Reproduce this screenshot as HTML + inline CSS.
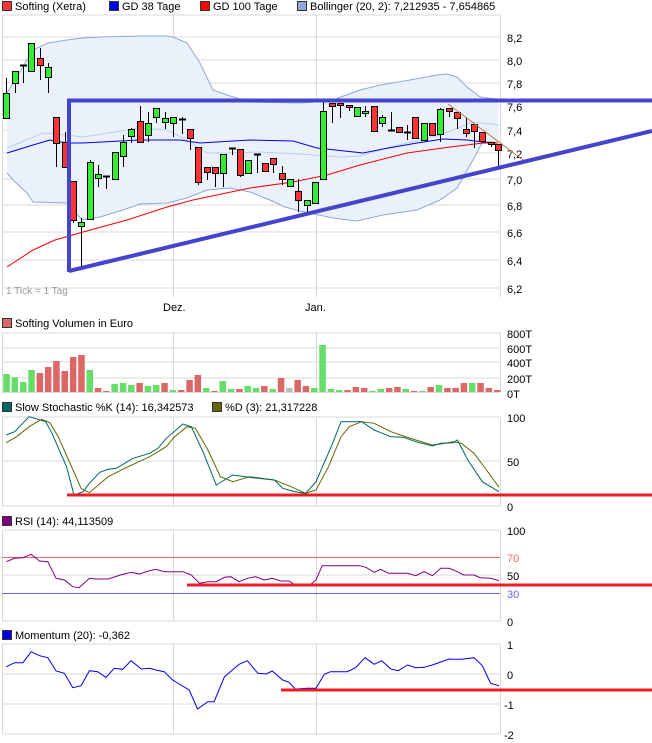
<!DOCTYPE html>
<html><head><meta charset="utf-8"><style>
html,body{margin:0;padding:0;background:#fff;}
svg{display:block;font-family:"Liberation Sans",sans-serif;}
</style></head><body>
<svg id="s" width="652" height="743" xmlns="http://www.w3.org/2000/svg"></svg>
<script>
var S=document.getElementById('s'),o='';
function L(x1,y1,x2,y2,c,w){o+='<line x1="'+x1+'" y1="'+y1+'" x2="'+x2+'" y2="'+y2+'" stroke="'+c+'" stroke-width="'+(w||1)+'"/>';}
function R(x,y,w,h,f,s){o+='<rect x="'+x+'" y="'+y+'" width="'+w+'" height="'+h+'" fill="'+f+'"'+(s?' stroke="'+s+'"':'')+'/>';}
function T(x,y,t,c,sz){o+='<text x="'+x+'" y="'+y+'" fill="'+(c||'#000')+'" font-size="'+(sz||11)+'">'+t+'</text>';}
function P(pts,c,w,f){o+='<polyline points="'+pts.map(function(p){return p[0]+','+p[1]}).join(' ')+'" fill="'+(f||'none')+'" stroke="'+c+'" stroke-width="'+(w||1)+'"/>';}
function Z(arr,oy){return arr.map(function(p){return[(p[0]/2.405).toFixed(1),(oy+p[1]/3).toFixed(1)]});}
var G='#d8d8d8';
function legend(x,y,c,t){R(x+.5,y+.5,9,9,c,'#333');T(x+13,y+9,t,'#000',11);}
legend(2,1,'#ff3333','Softing (Xetra)');legend(109,1,'#0000ee','GD 38 Tage');legend(200,1,'#ff0000','GD 100 Tage');legend(297,1,'#8fa8d8','Bollinger (20, 2): 7,212935 - 7,654865');
var gy=[37,60,83,106,130,153,179,205,232,260,288],gl=['8,2','8,0','7,8','7,6','7,4','7,2','7,0','6,8','6,6','6,4','6,2'];
L(2,15,500,15,G);
gy.forEach(function(y,i){L(2,y,500,y,G);T(507,y+5,gl[i],'#000',11);});
L(2.5,15,2.5,297,G);L(173.5,15,173.5,297,G);L(316.5,15,316.5,297,G);L(500.5,15,500.5,297,G);
var up=[[7,93],[15,80],[25,63],[33,50],[48,43],[67,40],[83,38],[100,37],[140,36],[167,36],[173,37],[187,43],[200,63],[213,90],[227,95],[243,100],[250,102],[300,103],[330,101],[360,90],[380,85],[410,80],[437,75],[447,74],[457,77],[467,87],[480,97],[487,98],[498,99]];
var lo=[[7,173],[13,180],[27,193],[33,202],[67,203],[82,220],[100,217],[123,210],[140,204],[167,203],[187,198],[207,190],[230,188],[250,192],[270,200],[285,207],[300,211],[333,218],[357,221],[383,215],[417,210],[440,200],[457,188],[473,160],[482,143],[490,142],[498,143]];
P(up.concat(lo.slice().reverse()),'none',0,'#eaf1fb');
P(up,'#8fa8d8');P(lo,'#8fa8d8');
P([[7,148],[43,133],[67,135],[83,137],[140,128],[167,130],[187,140],[207,153],[233,153],[260,152],[300,154],[340,157],[360,156],[390,147],[440,135],[473,122],[500,125]],'#b8d0f0');
P([[7,153],[33,145],[50,140],[67,143],[83,143],[140,140],[180,140],[200,143],[250,140],[293,141],[317,148],[363,153],[383,149],[417,143],[443,139],[467,140],[483,142],[498,143]],'#0000ee');
P([[7,267],[33,250],[55,240],[83,232],[127,220],[167,207],[193,200],[250,188],[293,182],[327,175],[360,165],[407,153],[450,147],[483,143],[498,143]],'#ff0000');
var g='#33ee33',r='#ff3333',C=[
[6,93,118,78,118,g],[15,71,83,71,93,g],[23,65,65,65,83,0],[31,43,71,43,71,g],[40,58,65,48,80,r],[48,67,77,63,93,g],
[56,117,143,117,167,r],[65,142,167,132,167,r],[73,181,220,181,223,r],[81,222,226,218,270,g],[90,162,219,160,219,g],[98,174,178,165,187,g],
[106,176,176,176,189,0],[115,152,179,152,179,g],[123,142,156,135,167,g],[131,129,136,128,143,g],[140,121,142,106,142,r],[148,123,135,112,142,g],
[156,108,117,108,123,g],[165,118,122,112,129,g],[173,117,123,117,137,g],[182,119,119,117,134,0],[190,129,138,129,150,r],[198,147,182,147,185,r],
[207,167,172,167,180,r],[215,167,173,167,187,r],[223,154,173,154,187,g],[232,148,148,148,155,0],[240,149,175,149,177,r],[248,160,173,160,173,g],
[257,154,154,154,173,0],[265,163,171,163,171,r],[273,158,164,158,173,r],[282,173,179,166,185,r],[290,179,186,179,186,g],[298,191,200,179,212,r],
[307,200,205,200,214,g],[315,182,203,182,203,g],[323,111,179,102,179,g],[332,103,106,103,123,r],[340,103,105,103,118,r],[349,105,107,105,111,r],
[357,107,116,107,116,g],[365,111,113,106,117,g],[374,106,131,106,131,r],[382,117,123,115,127,g],[391,130,130,112,130,0],[399,127,132,127,132,r],
[407,132,132,125,140,0],[415,117,138,117,138,r],[424,123,140,123,140,g],[432,123,135,123,135,r],[440,109,134,108,142,g],[449,108,111,108,117,r],
[457,112,118,112,129,r],[466,129,133,117,137,r],[474,124,131,124,148,r],[482,132,141,132,143,r],[491,142,144,142,147,r],[498,144,150,144,166,r]];
C.forEach(function(c){L(c[0]+.5,c[3],c[0]+.5,c[4],'#000');if(c[5])R(c[0]-2.5,c[1]+.5,6,Math.max(c[2]-c[1],2),c[5],'#000');else L(c[0]-3,c[1]+.5,c[0]+4,c[1]+.5,'#000',2);});
L(448,104,527,163,'#c07848');
L(69,100,69,272,'#4444cc',4);L(67,100.5,652,100.5,'#4444cc',4);L(69,271,652,131,'#4444cc',4);
T(6,294,'1 Tick = 1 Tag','#999',10);
T(163,311,'Dez.','#000',11);T(305,311,'Jan.','#000',11);
legend(2,318,'#dd6666','Softing Volumen in Euro');
[333,348,362,378].forEach(function(y){L(2,y,500,y,G);});
L(2.5,332,2.5,392,G);L(173.5,332,173.5,392,G);L(316.5,332,316.5,392,G);L(500.5,332,500.5,392,G);
[['800T',333],['600T',348],['400T',362],['200T',378],['0T',393]].forEach(function(a){T(507,a[1]+5,a[0]);});
var VG='#66dd66',VR='#dd6666',V=[[222,VG],[232,VG],[246,VG],[210,VG],[219,VR],[201,VR],[183,VR],[213,VR],[171,VR],[165,VR],[210,VG],[264,VR],[273,VR],[252,VG],[249,VG],[255,VG],[249,VR],[258,VG],[255,VG],[249,VR],[270,VG],[270,VR],[240,VR],[225,VR],[264,VG],[273,VR],[243,VG],[267,VG],[267,VR],[258,VG],[264,VG],[258,VR],[267,VG],[234,VR],[264,'#bbbbbb'],[240,VR],[258,VR],[264,VG],[135,VG],[267,VG],[270,VG],[270,VR],[261,VR],[264,VR],[273,VG],[267,VG],[264,VR],[261,VR],[267,VG],[273,VR],[273,VG],[261,VR],[255,VG],[264,VR],[264,VR],[249,VR],[249,VG],[249,VR],[264,VR],[270,VR]];
V.forEach(function(v,i){var x=(8+20*i)/2.405,y=300+v[0]/3;R(x.toFixed(1),y.toFixed(1),6.5,(392-y).toFixed(1),v[1]);});
L(2,392.5,500,392.5,G);
legend(2,402,'#006666','Slow Stochastic %K (14): 16,342573');legend(212,402,'#666600','%D (3): 21,317228');
L(2,417,500,417,G);L(2,461,500,461,G);L(2,506,500,506,G);
L(2.5,417,2.5,506,G);L(173.5,417,173.5,506,G);L(316.5,417,316.5,506,G);L(500.5,417,500.5,506,G);
T(507,422,'100');T(507,466,'50');T(507,511,'0');
P(Z([[15,428],[40,410],[70,380],[100,358],[120,368],[140,410],[165,480],[195,565],[215,578],[260,530],[300,505],[360,470],[400,440],[420,410],[450,380],[470,385],[500,450],[530,530],[560,545],[600,530],[660,540],[700,560],[735,580],[760,570],[790,500],[820,410],[840,380],[870,365],[900,370],[940,395],[1000,420],[1040,435],[1060,432],[1090,425],[1110,430],[1140,460],[1170,510],[1200,562]],300),'#666600');
P(Z([[15,405],[35,395],[70,350],[110,365],[125,400],[160,500],[178,585],[200,575],[215,550],[240,517],[260,508],[280,505],[320,475],[360,460],[380,445],[400,415],[440,372],[460,380],[490,460],[520,555],[540,540],[560,525],[590,530],[620,535],[660,540],[680,565],[710,575],[735,580],[760,545],[800,430],[820,365],[870,365],[900,390],[940,410],[970,412],[1000,425],[1040,438],[1060,430],[1090,428],[1100,420],[1125,480],[1160,545],[1200,575]],300),'#006666');
L(67,495,652,495,'#ee1c24',3);
legend(2,516,'#800080','RSI (14): 44,113509');
L(2,530,500,530,G);L(2,575,500,575,G);L(2,621,500,621,G);
L(2.5,530,2.5,621,G);L(173.5,530,173.5,621,G);L(316.5,530,316.5,621,G);L(500.5,530,500.5,621,G);
L(2,557.5,500,557.5,'#ff6666');L(2,593.5,500,593.5,'#6666ff');
T(507,535,'100');T(507,562,'70','#ff6666');T(507,580,'50');T(507,598,'30','#6666ff');T(507,626,'0');
P(Z([[15,140],[35,130],[55,128],[75,118],[95,138],[115,140],[135,190],[155,195],[175,215],[190,218],[215,190],[230,192],[260,192],[290,180],[315,172],[335,177],[360,167],[375,163],[395,170],[440,170],[460,180],[480,205],[500,200],[520,200],[540,187],[555,185],[575,200],[595,190],[615,185],[635,195],[655,190],[675,198],[695,198],[710,210],[745,210],[760,195],[775,152],[865,152],[880,157],[900,172],[915,163],[935,175],[980,175],[1000,182],[1020,170],[1040,182],[1060,160],[1080,160],[1100,170],[1115,180],[1140,180],[1155,188],[1180,190],[1200,197]],515),'#800080');
L(187,585,652,585,'#ee1c24',3);
legend(2,630,'#0000ee','Momentum (20): -0,362');
L(2,644,500,644,G);L(2,674,500,674,G);L(2,704,500,704,G);L(2,734,500,734,G);
L(2.5,644,2.5,734,G);L(173.5,644,173.5,734,G);L(316.5,644,316.5,734,G);L(500.5,644,500.5,734,G);
T(507,649,'1');T(507,679,'0');T(504,709,'-1');T(504,739,'-2');
P(Z([[15,455],[35,443],[55,443],[75,410],[95,422],[115,428],[135,468],[155,475],[175,518],[195,512],[215,467],[235,470],[255,487],[275,460],[295,463],[315,437],[340,462],[360,460],[375,465],[395,470],[415,495],[455,525],[475,582],[500,560],[515,560],[540,485],[575,448],[595,437],[620,475],[640,477],[655,468],[680,495],[695,502],[710,522],[740,520],[760,520],[780,478],[795,470],[835,470],[855,458],[878,428],[900,448],[918,437],[940,462],[958,467],[980,450],[1000,458],[1020,457],[1040,450],[1080,432],[1090,433],[1110,433],[1140,428],[1160,452],[1180,505],[1200,512]],515),'#0000ee');
L(281,690,652,690,'#ee1c24',3);
S.innerHTML=o;
</script>
</body></html>
